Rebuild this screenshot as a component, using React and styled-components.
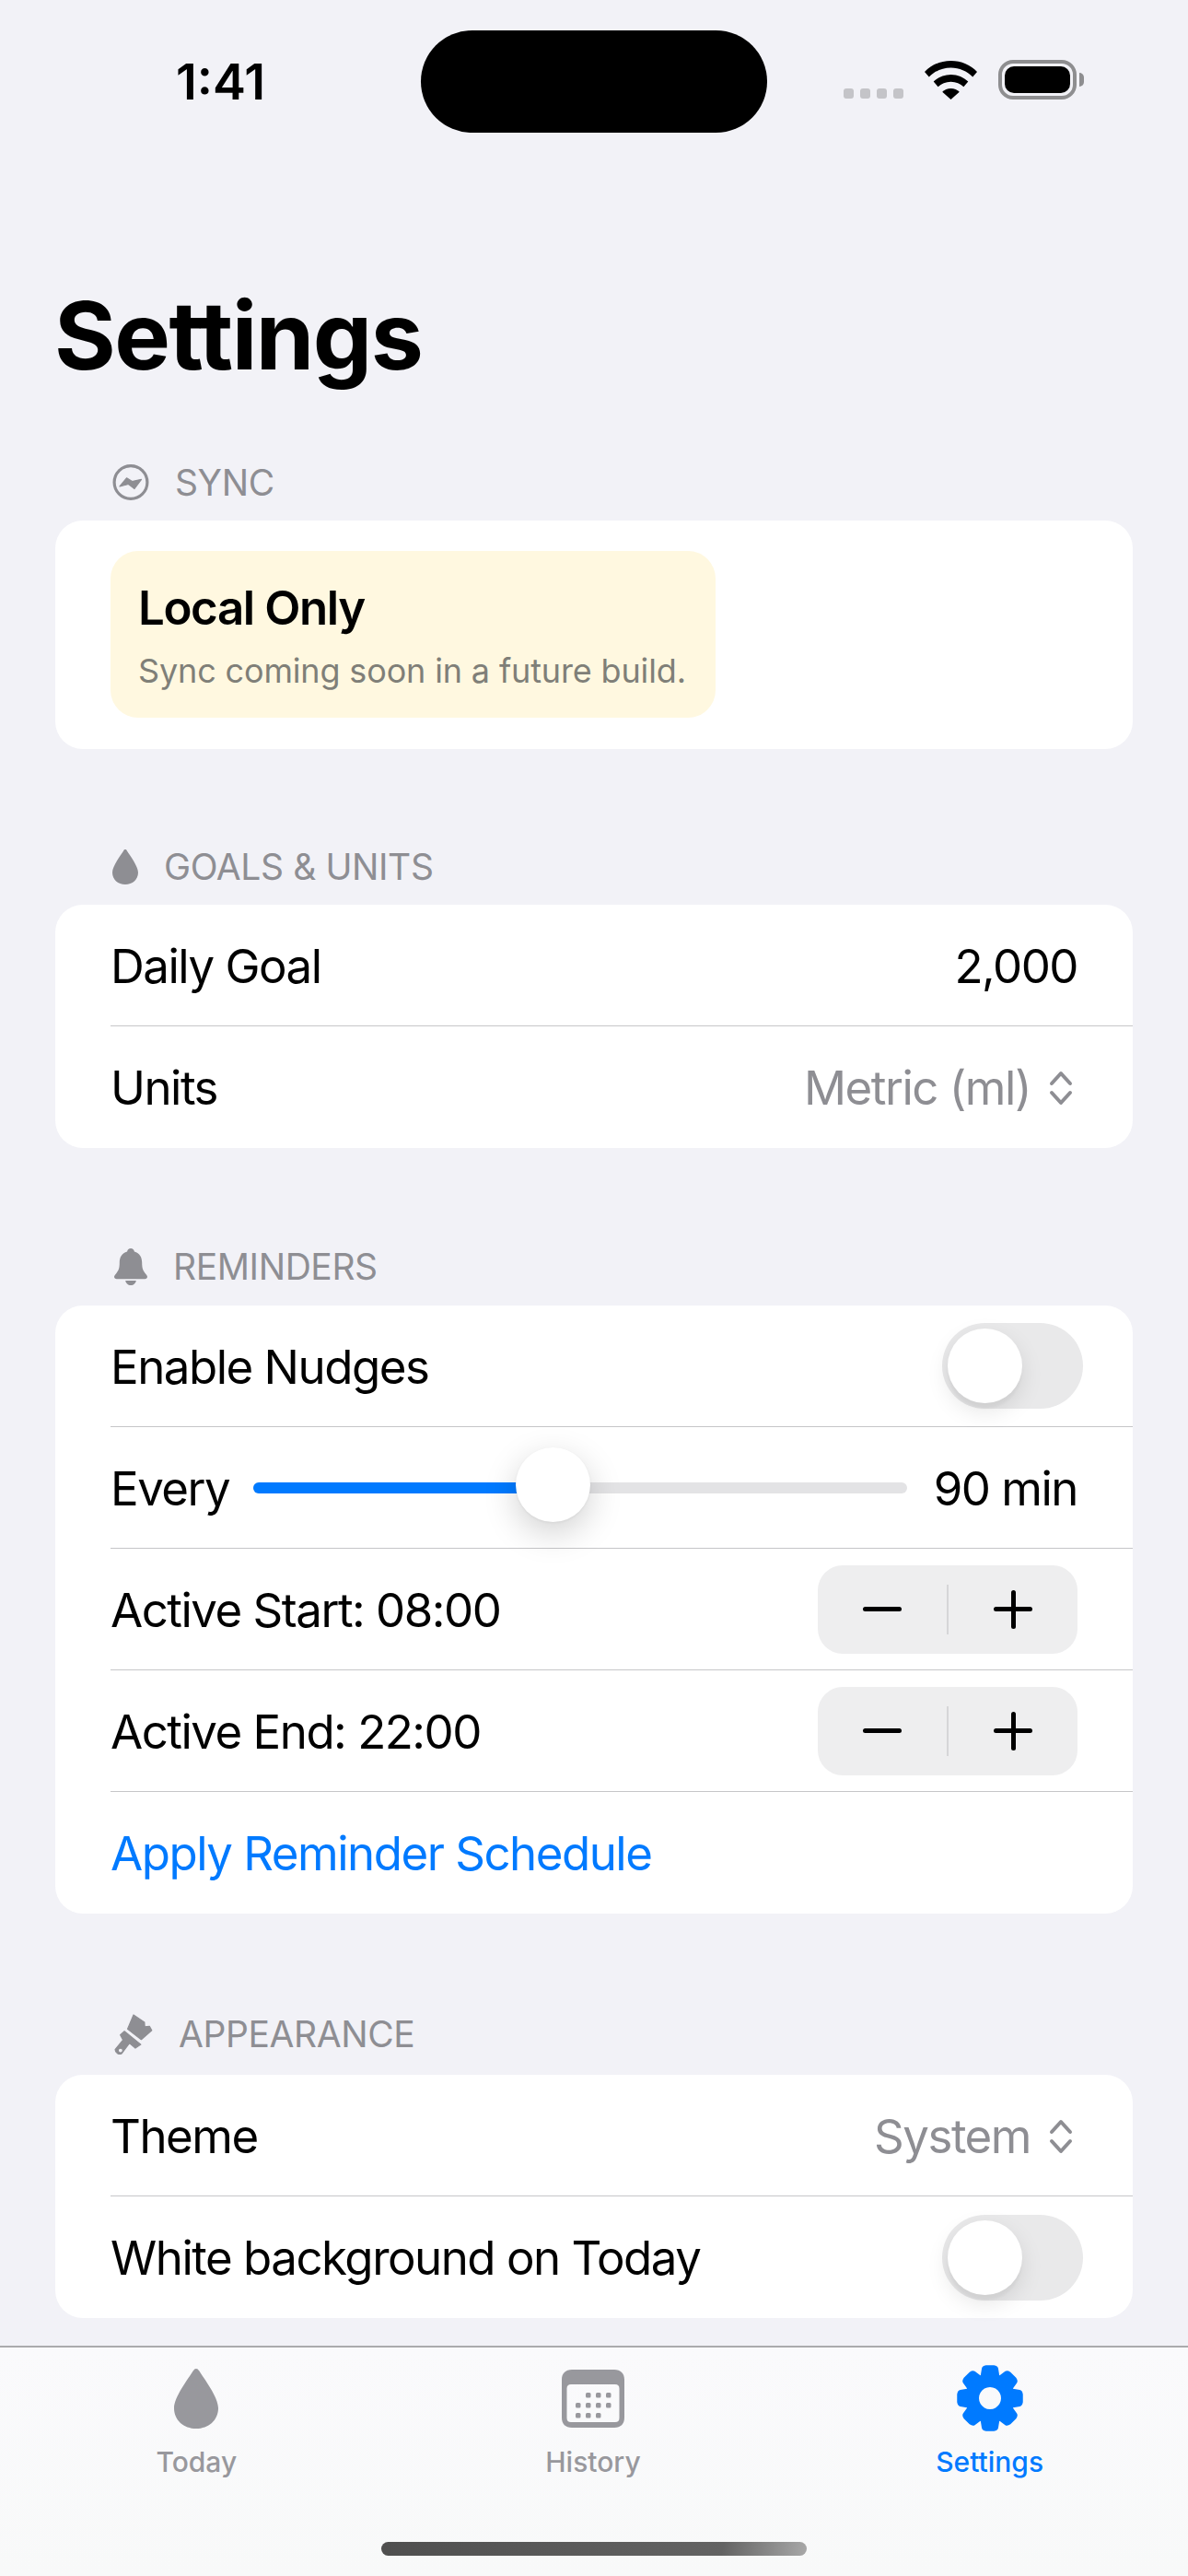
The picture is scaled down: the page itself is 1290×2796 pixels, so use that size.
import React from 'react';
import styled, { createGlobalStyle } from 'styled-components';

const GEAR_PATH = (() => {
  // 8 teeth around (36,36), hole punched with evenodd
  const pts = [];
  const teeth = 8;
  for (let i = 0; i < teeth; i++) {
    const a = (i * Math.PI * 2) / teeth - Math.PI / 2;
    const at = (r, d) => {
      const x = 36 + r * Math.cos(a + d);
      const y = 36 + r * Math.sin(a + d);
      return `${x.toFixed(2)} ${y.toFixed(2)}`;
    };
    pts.push(`${i === 0 ? 'M' : 'L'}${at(27, -0.385)}`);
    pts.push(`L${at(33.5, -0.27)}`);
    pts.push(`Q${at(36, -0.24)} ${at(36, -0.12)}`);
    pts.push(`L${at(36, 0.12)}`);
    pts.push(`Q${at(36, 0.24)} ${at(33.5, 0.27)}`);
    pts.push(`L${at(27, 0.385)}`);
  }
  return `${pts.join(' ')} Z M36 24a12 12 0 1 0 0.01 0Z`;
})();

const Drop = ({ $w, $h, color }) => (
  <svg width={$w} height={$h} viewBox="0 0 28 38" fill={color}>
    <path d="M14 0c.8 0 1.3.5 1.9 1.4C19 6.5 28 18 28 25 28 32.8 21.8 38 14 38S0 32.8 0 25C0 18 9 6.5 12.1 1.4 12.7.5 13.2 0 14 0Z" />
  </svg>
);

const SyncIcon = () => (
  <svg width="40" height="39" viewBox="-0.5 0 40 39">
    <circle cx="19.5" cy="19.5" r="17.9" fill="none" stroke="#8e8e93" strokeWidth="3.2" />
    <path
      d="M7.5 24 15 14.8l6 3.8 10-2.3-7.5 10.2-6.5-5Z"
      fill="#8e8e93"
      stroke="#8e8e93"
      strokeWidth="1.2"
      strokeLinejoin="round"
    />
  </svg>
);

const BellIcon = () => (
  <svg width="38" height="40" viewBox="-2 0 38 40" fill="#8e8e93">
    <path d="M18 0c2.100 0 3.600 1.400 3.900 3.500C27.700 5.100 30.200 9.700 30.200 15.600c0 6.300 1.200 8.800 3.400 11.300 1.100 1.300 2.400 2.500 2.400 3.900 0 1.500-1.100 2.400-2.700 2.400H2.700C1.100 33.200 0 32.300 0 30.800c0-1.400 1.300-2.600 2.400-3.900C4.600 24.400 5.800 21.900 5.800 15.600 5.800 9.700 8.300 5.100 14.100 3.500 14.400 1.400 15.900 0 18 0Z" />
    <path d="M12.200 35h11.600c-.4 2.900-2.800 5-5.800 5s-5.400-2.100-5.800-5Z" />
  </svg>
);

const BrushIcon = () => (
  <svg width="44" height="44" viewBox="-2 0 44 44.5" fill="#8e8e93" stroke="#8e8e93" strokeWidth="1.2" strokeLinejoin="round">
    <path d="M21 1 33 9l.3 5 5.200-.5L41 18 29.500 28 14.500 16.500Z" />
    <path
      fillRule="evenodd"
      d="M11 19 29 33.500l-6 4-6.500-5.500L8 43.500C5 45 1 43 .8 39l8.700-10.500-3-5.500ZM6.700 37.500a2.500 2.500 0 1 0 .01 0Z"
    />
  </svg>
);

const ChevronsIcon = () => (
  <svg width="26" height="38" viewBox="0 0 26 38" fill="none" stroke="#8e8e93" strokeWidth="4" strokeLinecap="round" strokeLinejoin="round">
    <path d="M3 14 13 3l10 11" />
    <path d="M3 24l10 11 10-11" />
  </svg>
);

const WifiIcon = () => (
  <svg width="57" height="42" viewBox="0 0 57 42" fill="#000">
    <path d="M28.500 0C40 0 50 4.500 57 12l-4.800 5.600C46 11.200 37.800 7.500 28.500 7.500S11 11.200 4.800 17.600L0 12C7 4.500 17 0 28.500 0Z" />
    <path d="M28.500 15c7.500 0 14 2.900 18.800 7.600l-4.900 5.700c-3.500-3.400-8.400-5.500-13.900-5.500s-10.400 2.100-13.900 5.500l-4.900-5.700C14.500 17.900 21 15 28.500 15Z" />
    <path d="M28.500 30c3.700 0 7 1.400 9.300 3.700L28.500 42l-9.300-8.300c2.300-2.300 5.600-3.700 9.300-3.700Z" />
  </svg>
);

const CalendarIcon = () => (
  <svg width="68" height="63" viewBox="0 0 68 63" fill="#98989d">
    <path fillRule="evenodd" d="M11 0h46c7 0 11 4 11 11v41c0 7-4 11-11 11H11C4 63 0 59 0 52V11C0 4 4 0 11 0Zm-1 16c-3 0-4.500 1.500-4.500 4.500v32c0 3 1.500 4.500 4.500 4.500h48c3 0 4.500-1.500 4.500-4.500v-32c0-3-1.500-4.500-4.500-4.500Z" />
    {[
      [26, 25], [37, 25], [48, 25],
      [15, 36], [26, 36], [37, 36], [48, 36],
      [15, 47], [26, 47], [37, 47],
    ].map(([x, y]) => (
      <rect key={`${x}-${y}`} x={x} y={y} width="5.5" height="5.5" rx="1.5" />
    ))}
  </svg>
);

const GearIcon = () => (
  <svg width="72" height="72" viewBox="0 0 72 72">
    <path d={GEAR_PATH} fill="#007aff" fillRule="evenodd" />
  </svg>
);

const Stepper = () => (
  <StepperBox>
    <StepButton>
      <MinusMark />
    </StepButton>
    <StepDivider />
    <StepButton>
      <PlusMark />
    </StepButton>
  </StepperBox>
);

const App = () => (
  <Screen>
    <GlobalStyle />
    <StatusBar>
      <Clock>1:41</Clock>
      <Island />
      <StatusIcons>
        <SignalDots>
          <Dot />
          <Dot />
          <Dot />
          <Dot />
        </SignalDots>
        <WifiIcon />
        <Battery>
          <BatteryFill />
          <BatteryNub />
        </Battery>
      </StatusIcons>
    </StatusBar>

    <Content>
      <PageTitle>Settings</PageTitle>

      <SectionHeader>
        <SyncIcon />
        <SectionLabel>Sync</SectionLabel>
      </SectionHeader>
      <Card $padded>
        <Notice>
          <NoticeTitle>Local Only</NoticeTitle>
          <NoticeText>Sync coming soon in a future build.</NoticeText>
        </Notice>
      </Card>

      <SectionHeader $spaced>
        <Drop $w={28} $h={38} color="#8e8e93" />
        <SectionLabel>Goals &amp; Units</SectionLabel>
      </SectionHeader>
      <Card>
        <Row>
          <RowText>Daily Goal</RowText>
          <RowText>2,000</RowText>
        </Row>
        <Row>
          <RowText>Units</RowText>
          <PickerValue>
            Metric (ml)
            <ChevronsIcon />
          </PickerValue>
        </Row>
      </Card>

      <SectionHeader $spaced>
        <BellIcon />
        <SectionLabel>Reminders</SectionLabel>
      </SectionHeader>
      <Card>
        <Row>
          <RowText>Enable Nudges</RowText>
          <Toggle>
            <ToggleKnob />
          </Toggle>
        </Row>
        <Row>
          <RowText>Every</RowText>
          <SliderTrack>
            <SliderFill style={{ width: 326 }} />
            <SliderKnob style={{ left: 285 }} />
          </SliderTrack>
          <RowText>90 min</RowText>
        </Row>
        <Row>
          <RowText>Active Start: 08:00</RowText>
          <Stepper />
        </Row>
        <Row>
          <RowText>Active End: 22:00</RowText>
          <Stepper />
        </Row>
        <Row>
          <LinkText>Apply Reminder Schedule</LinkText>
        </Row>
      </Card>

      <SectionHeader $spaced>
        <BrushIcon />
        <SectionLabel>Appearance</SectionLabel>
      </SectionHeader>
      <Card>
        <Row>
          <RowText>Theme</RowText>
          <PickerValue>
            System
            <ChevronsIcon />
          </PickerValue>
        </Row>
        <Row>
          <RowText>White background on Today</RowText>
          <Toggle>
            <ToggleKnob />
          </Toggle>
        </Row>
      </Card>
    </Content>

    <TabBar>
      <Tabs>
        <Tab>
          <TabIcon>
            <Drop $w={48} $h={69} color="#98989d" />
          </TabIcon>
          <TabLabel>Today</TabLabel>
        </Tab>
        <Tab>
          <TabIcon>
            <CalendarIcon />
          </TabIcon>
          <TabLabel>History</TabLabel>
        </Tab>
        <Tab>
          <TabIcon>
            <GearIcon />
          </TabIcon>
          <TabLabel $active>Settings</TabLabel>
        </Tab>
      </Tabs>
      <HomeIndicator />
    </TabBar>
  </Screen>
);

const GlobalStyle = createGlobalStyle`
  html,
  body {
    margin: 0;
    padding: 0;
    background: #f2f2f7;
  }

  * {
    box-sizing: border-box;
  }
`;

const Screen = styled.div`
  width: 1290px;
  height: 2796px;
  display: flex;
  flex-direction: column;
  overflow: hidden;
  background: #f2f2f7;
  color: #000;
  font-family: 'Inter', 'Liberation Sans', sans-serif;
`;

const StatusBar = styled.div`
  flex: none;
  height: 144px;
  padding: 33px 53px 0 191px;
  display: flex;
  align-items: flex-start;
`;

const Clock = styled.div`
  width: 266px;
  margin-top: 25px;
  font-size: 54px;
  line-height: 62px;
  font-weight: 600;
`;

const Island = styled.div`
  flex: none;
  width: 376px;
  height: 111px;
  border-radius: 56px;
  background: #000;
`;

const StatusIcons = styled.div`
  margin: 32px 0 0 83px;
  display: flex;
  align-items: flex-end;
`;

const SignalDots = styled.div`
  display: flex;
  gap: 7px;
  margin: 0 23px 1px 0;
`;

const Dot = styled.span`
  width: 11px;
  height: 11px;
  border-radius: 3px;
  background: #c4c4c8;
`;

const Battery = styled.div`
  position: relative;
  width: 85px;
  height: 43px;
  margin-left: 23px;
  padding: 3px;
  border: 4px solid #8e8e90;
  border-radius: 16px;
`;

const BatteryFill = styled.div`
  height: 100%;
  border-radius: 10px;
  background: #000;
`;

const BatteryNub = styled.span`
  position: absolute;
  top: 10px;
  right: -12px;
  width: 5px;
  height: 15px;
  border-radius: 0 5px 5px 0;
  background: #8e8e90;
`;

const Content = styled.main`
  flex: 1;
  min-height: 0;
  padding: 0 60px;
`;

const PageTitle = styled.h1`
  height: 360px;
  margin: 0 0 0 -1px;
  padding-top: 153px;
  font-size: 102px;
  line-height: 135px;
  font-weight: 700;
  letter-spacing: -1.5px;
`;

const SectionHeader = styled.div`
  display: flex;
  align-items: center;
  gap: 28px;
  margin: ${({ $spaced }) => ($spaced ? '109px' : '0')} 0 22px 62px;
`;

const SectionLabel = styled.span`
  font-size: 39px;
  line-height: 38px;
  font-weight: 400;
  letter-spacing: -0.4px;
  color: #8e8e93;
  text-transform: uppercase;
`;

const Card = styled.section`
  border-radius: 30px;
  background: #fff;
  padding: ${({ $padded }) => ($padded ? '33px 60px 34px' : '0')};
`;

const Notice = styled.div`
  display: inline-flex;
  flex-direction: column;
  height: 181px;
  padding: 31px 32px 0 30px;
  border-radius: 30px;
  background: #fff8e0;
  vertical-align: top;
`;

const NoticeTitle = styled.div`
  font-size: 51px;
  line-height: 62px;
  font-weight: 600;
  letter-spacing: -1.4px;
`;

const NoticeText = styled.div`
  margin-top: 15px;
  font-size: 36px;
  line-height: 44px;
  letter-spacing: -0.15px;
  color: #7f7f78;
`;

const Row = styled.div`
  height: 132px;
  margin-left: 60px;
  padding-right: 60px;
  display: flex;
  align-items: center;
  justify-content: space-between;
  gap: 29px;
  border-bottom: 1px solid #c6c6c8;

  &:last-child {
    border-bottom: none;
  }
`;

const RowText = styled.span`
  flex: none;
  padding-top: 2px;
  font-size: 51px;
  line-height: 62px;
  letter-spacing: -1.5px;
`;

const LinkText = styled(RowText)`
  color: #007aff;
`;

const PickerValue = styled.span`
  display: flex;
  align-items: center;
  gap: 20px;
  margin-right: 5px;
  padding-top: 2px;
  font-size: 51px;
  line-height: 62px;
  letter-spacing: -1.5px;
  color: #8e8e93;
`;

const Toggle = styled.div`
  width: 153px;
  height: 93px;
  margin-right: -6px;
  padding: 6px;
  border-radius: 47px;
  background: #e9e9ea;
`;

const ToggleKnob = styled.div`
  width: 81px;
  height: 81px;
  border-radius: 50%;
  background: #fff;
  box-shadow: 0 9px 24px rgba(0, 0, 0, 0.1), 0 6px 3px rgba(0, 0, 0, 0.03);
`;

const SliderTrack = styled.div`
  position: relative;
  flex: 1;
  height: 12px;
  margin-left: -3px;
  border-radius: 6px;
  background: #e3e3e5;
`;

const SliderFill = styled.div`
  height: 100%;
  border-radius: 6px;
  background: #007aff;
`;

const SliderKnob = styled.div`
  position: absolute;
  top: -38px;
  width: 81px;
  height: 81px;
  border-radius: 50%;
  background: #fff;
  box-shadow: 0 12px 36px rgba(0, 0, 0, 0.18), 0 1px 3px rgba(0, 0, 0, 0.06);
`;

const StepperBox = styled.div`
  width: 282px;
  height: 96px;
  display: flex;
  align-items: center;
  border-radius: 27px;
  background: #eeeeef;
`;

const StepButton = styled.div`
  flex: 1;
  height: 100%;
  display: flex;
  align-items: center;
  justify-content: center;
`;

const StepDivider = styled.span`
  flex: none;
  width: 2px;
  height: 54px;
  background: #d6d6d8;
`;

const MinusMark = styled.span`
  width: 42px;
  height: 5px;
  border-radius: 3px;
  background: #000;
`;

const PlusMark = styled.span`
  position: relative;
  width: 42px;
  height: 5px;
  border-radius: 3px;
  background: #000;

  &::after {
    content: '';
    position: absolute;
    left: 18.5px;
    top: -18.5px;
    width: 5px;
    height: 42px;
    border-radius: 3px;
    background: #000;
  }
`;

const TabBar = styled.nav`
  flex: none;
  height: 250px;
  display: flex;
  flex-direction: column;
  border-top: 2px solid #ababad;
  background: linear-gradient(180deg, #fafafc 0%, #f8f9f9 100%);
`;

const Tabs = styled.div`
  margin-left: -2px;
  display: grid;
  grid-template-columns: repeat(3, 1fr);
`;

const Tab = styled.div`
  display: flex;
  flex-direction: column;
  align-items: center;
`;

const TabIcon = styled.div`
  height: 72px;
  margin-top: 19px;
  display: flex;
  align-items: center;
  justify-content: center;
`;

const TabLabel = styled.span`
  margin-top: 15px;
  font-size: 30px;
  line-height: 36px;
  font-weight: 500;
  color: ${({ $active }) => ($active ? '#007aff' : '#98989d')};
`;

const HomeIndicator = styled.div`
  width: 462px;
  height: 15px;
  margin: 69px auto 0;
  border-radius: 8px;
  background: linear-gradient(100deg, #4f4f4f 0%, #636363 80%, #a8a8a8 100%);
`;

export default App;
